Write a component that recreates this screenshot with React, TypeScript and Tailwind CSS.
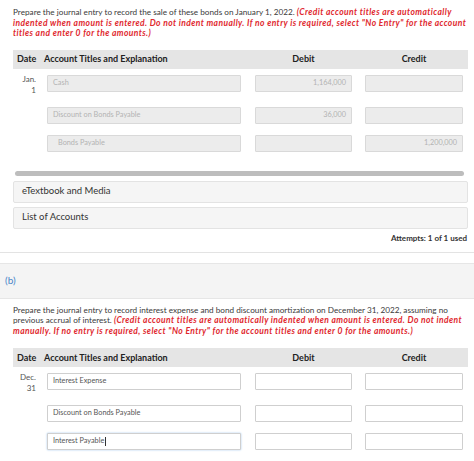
import React from "react";

const FONT = { fontFamily: "Lato, 'Open Sans', sans-serif" };

type Row = { account: string; debit?: string; credit?: string; indent?: boolean; focused?: boolean };

function Header() {
  return (
    <div className="flex items-center h-[19px] bg-[#e5e5e5] text-[9px] font-bold text-[#222]">
      <div className="w-[31px] pl-[4px]">Date</div>
      <div className="w-[197px]">Account Titles and Explanation</div>
      <div className="w-[14px]" />
      <div className="w-[97px] text-center">Debit</div>
      <div className="w-[13px]" />
      <div className="w-[98px] text-center">Credit</div>
    </div>
  );
}

function Entry({ date, rows, disabled }: { date: [string, string]; rows: Row[]; disabled: boolean }) {
  const box = disabled
    ? "bg-[#ececec] border border-[#d9d9d9] text-[#b3b3b3]"
    : "bg-white border border-[#cfcfcf] text-[#555]";
  return (
    <div className="flex flex-col gap-[11px] mt-[6px]">
      {rows.map((r, i) => (
        <div key={i} className="flex">
          <div className="w-[34px] pr-[11px] text-right text-[8px] leading-[11px] text-[#555] -mt-[1px]">
            {i === 0 ? (
              <>
                <div>{date[0]}</div>
                <div>{date[1]}</div>
              </>
            ) : null}
          </div>
          <div
            className={`w-[194px] h-[17px] flex items-center text-[7.3px] rounded-[1px] ${box} ${
              r.indent ? "pl-[10px]" : "pl-[5px]"
            } ${r.focused ? "border-[#79a6d9] shadow-[0_0_2px_#9cc0ea]" : ""}`}
          >
            {r.account}
            {r.focused ? <span className="inline-block w-[1px] h-[9px] bg-[#333] ml-[0.5px]" /> : null}
          </div>
          <div className="w-[14px]" />
          <div className={`w-[97px] h-[17px] flex items-center justify-end pr-[5px] text-[7.3px] rounded-[1px] ${box}`}>
            {r.debit ?? ""}
          </div>
          <div className="w-[13px]" />
          <div className={`w-[98px] h-[17px] flex items-center justify-end pr-[5px] text-[7.3px] rounded-[1px] ${box}`}>
            {r.credit ?? ""}
          </div>
        </div>
      ))}
    </div>
  );
}

const RED = "font-bold italic text-[8.5px] text-[#e0282e] tracking-[0.4px]";

export default function App() {
  return (
    <div className="w-[474px] h-[461px] overflow-hidden bg-white" style={FONT}>
      <div className="border-b border-[#e3e3e3]">
        <div className="pl-[13px] pr-[6px] pt-[7px] pb-[8px]">
          <div className="text-[8.2px] leading-[10.5px] text-[#3a3a3a] whitespace-nowrap">
            <div>
              Prepare the journal entry to record the sale of these bonds on January 1, 2022.{" "}
              <span className={RED}>(Credit account titles are automatically</span>
            </div>
            <div className={RED}>
              indented when amount is entered. Do not indent manually. If no entry is required, select "No Entry" for the account
            </div>
            <div className={RED}>titles and enter 0 for the amounts.)</div>
          </div>
          <div className="mt-[11px]">
            <Header />
            <Entry
              disabled
              date={["Jan.", "1"]}
              rows={[
                { account: "Cash", debit: "1,164,000" },
                { account: "Discount on Bonds Payable", debit: "36,000" },
                { account: "Bonds Payable", credit: "1,200,000", indent: true },
              ]}
            />
          </div>
          <div className="mt-[19px] ml-[2px] mr-[4px] h-[5px] rounded-full bg-[#bdbdbd]" />
          <div className="mt-[5px] flex flex-col gap-[4px]">
            <div className="h-[22px] flex items-center pl-[8px] bg-[#f5f5f5] border border-[#e3e3e3] rounded-[2px] text-[9.5px] text-[#333]">
              eTextbook and Media
            </div>
            <div className="h-[22px] flex items-center pl-[8px] bg-[#f5f5f5] border border-[#e3e3e3] rounded-[2px] text-[9.5px] text-[#333]">
              List of Accounts
            </div>
          </div>
          <div className="mt-[3px] text-right text-[8px] font-bold text-[#333] pr-[1px]">Attempts: 1 of 1 used</div>
        </div>
      </div>
      <div className="mt-[10px] h-[36px] bg-[#f4f4f4] border-y border-[#e6e6e6] flex items-center pl-[5px] text-[10px] text-[#4a86c8]">
        (b)
      </div>
      <div className="pl-[13px] pr-[6px] pt-[6px]">
        <div className="text-[8.2px] leading-[10.5px] text-[#3a3a3a] whitespace-nowrap">
          <div>
            Prepare the journal entry to record interest expense and bond discount amortization on December 31, 2022, assuming no
          </div>
          <div>
            previous accrual of interest.{" "}
            <span className={RED}>
              (Credit account titles are automatically indented when amount is entered. Do not indent
            </span>
          </div>
          <div className={RED}>
            manually. If no entry is required, select "No Entry" for the account titles and enter 0 for the amounts.)
          </div>
        </div>
        <div className="mt-[12px]">
          <Header />
          <Entry
            disabled={false}
            date={["Dec.", "31"]}
            rows={[
              { account: "Interest Expense" },
              { account: "Discount on Bonds Payable" },
              { account: "Interest Payable", focused: true },
            ]}
          />
        </div>
      </div>
    </div>
  );
}
